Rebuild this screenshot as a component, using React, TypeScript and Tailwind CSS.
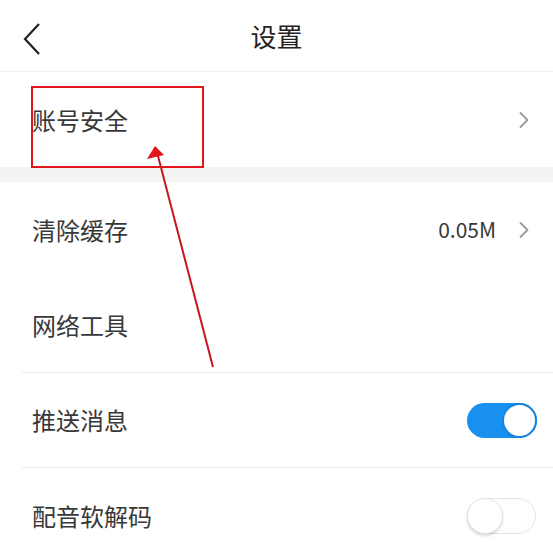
import React from 'react'

const font = { fontFamily: '"Noto Sans CJK SC", "Noto Sans", sans-serif' }

function Chevron() {
  return (
    <svg width="12" height="18" viewBox="0 0 12 18" className="shrink-0">
      <path d="M2.5 2 L9.5 9 L2.5 16" fill="none" stroke="#9a9a9a" strokeWidth="1.8" strokeLinecap="round" strokeLinejoin="round" />
    </svg>
  )
}

function Toggle({ on }: { on: boolean }) {
  return on ? (
    <div className="relative -mr-[7px] h-[35px] w-[70px] rounded-full bg-[#1890ef]">
      <div className="absolute right-0 top-0 h-[35px] w-[35px] rounded-full border-2 border-[#1783df] bg-white" />
    </div>
  ) : (
    <div className="relative -mr-[6px] h-[36px] w-[69px] rounded-full border border-[#e3e3e3] bg-white">
      <div className="absolute left-[-1px] top-[-1px] h-[36px] w-[36px] rounded-full border border-[#e6e6e6] bg-white shadow-[0_2px_3px_rgba(0,0,0,0.15)]" />
    </div>
  )
}

function Row({ label, h, children }: { label: string; h: string; children?: React.ReactNode }) {
  return (
    <div className={`flex items-center justify-between pl-8 pr-[23px] ${h}`}>
      <span className="text-[24px] leading-none text-[#383838]">{label}</span>
      <div className="flex items-center gap-[22px]">{children}</div>
    </div>
  )
}

export default function App() {
  return (
    <div className="relative h-[560px] w-[553px] overflow-hidden bg-white" style={font}>
      <header className="relative flex h-[72px] items-center justify-center border-b border-[#efefef]">
        <svg width="20" height="34" viewBox="0 0 20 34" className="absolute left-[22px] top-[22px]">
          <path d="M17 2 L3 17 L17 32" fill="none" stroke="#222" strokeWidth="2.2" strokeLinejoin="miter" />
        </svg>
        <h1 className="text-[26px] leading-none text-[#222]">设置</h1>
      </header>

      <Row label="账号安全" h="h-[95px]">
        <Chevron />
      </Row>
      <div className="h-[15px] bg-[#f3f3f3]" />
      <Row label="清除缓存" h="h-[95px]">
        <span className="text-[21px] leading-none text-[#383838]">0.05M</span>
        <Chevron />
      </Row>
      <Row label="网络工具" h="h-[95px]" />
      <div className="ml-[22px] h-px bg-[#ececec]" />
      <Row label="推送消息" h="h-[94px]">
        <Toggle on />
      </Row>
      <div className="ml-[22px] h-px bg-[#ececec]" />
      <Row label="配音软解码" h="h-[95px]">
        <Toggle on={false} />
      </Row>

      {/* annotation overlay */}
      <div className="pointer-events-none absolute left-[31px] top-[86px] h-[82px] w-[173px] border-2 border-[#e0161c]" />
      <svg className="pointer-events-none absolute left-0 top-0" width="553" height="560">
        <line x1="213" y1="367" x2="158" y2="156" stroke="#c8141c" strokeWidth="2" />
        <polygon points="155,146 147,159 164,155" fill="#e0161c" />
      </svg>
    </div>
  )
}
